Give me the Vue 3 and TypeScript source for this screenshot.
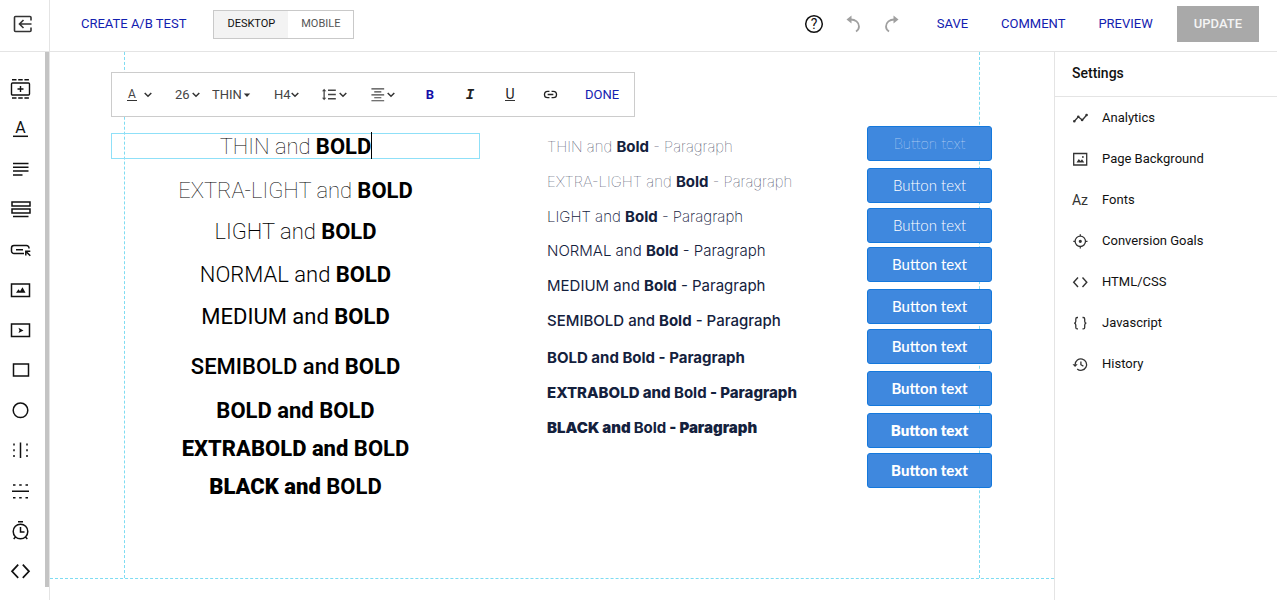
<script setup lang="ts">
import { h, ref } from 'vue'

interface Glyph { text: string; x: number; y: number; size: number; weight?: number }
interface Icon { line?: string; fill?: string; width?: number; glyph?: Glyph }

const icons: Record<string, Icon> = {
  back: { line: 'M21 8.500V5.500a1 1 0 0 0-1-1H5.500a1 1 0 0 0-1 1v13a1 1 0 0 0 1 1H20a1 1 0 0 0 1-1V15.500M21.500 12H10M13.500 8l-4 4 4 4', width: 1.6 },
  help: { line: 'M20.300 12a8.300 8.300 0 1 1-16.600 0a8.300 8.300 0 0 1 16.600 0', width: 1.5, glyph: { text: '?', x: 12, y: 17, size: 14 } },
  undo: { line: 'M9 7.500C14.500 7.200 18 10.500 18 14.500c0 2-1 3.700-3 5', fill: 'M5.500 7.500L10.500 3.500V11.500z', width: 1.8 },
  redo: { line: 'M15 7.500C9.500 7.200 6 10.500 6 14.500c0 2 1 3.700 3 5', fill: 'M18.500 7.500L13.500 3.500V11.500z', width: 1.8 },
  section: { line: 'M4.500 6h16a1 1 0 0 1 1 1v10a1 1 0 0 1-1 1h-16a1 1 0 0 1-1-1V7a1 1 0 0 1 1-1zM12.500 9v6M9.500 12h6M4 2.800h4.500M10.200 2.800h4.500M16.400 2.800h4.500M4 21h4.500M10.200 21h4.500M16.400 21h4.500', width: 1.4 },
  headline: { line: 'M5 19.300h15', glyph: { text: 'A', x: 12.5, y: 16, size: 16 } },
  paragraph: { line: 'M5 6.500h15.500M5 10.300h15.500M5 14.100h15.500M5 17.900h9.500' },
  form: { line: 'M4 5h18v4H4zM4 12h18v4H4zM5 19.500h15.500' },
  button: { line: 'M16 15.500H6a2.500 2.500 0 0 1-2.500-2.500v-3a2.500 2.500 0 0 1 2.500-2.500h12.500a2.500 2.500 0 0 1 2.500 2.500v.500M8 11.700h7M17.800 17.500v-4.300h4.500M18 13.500l4.300 4.300' },
  image: { line: 'M3.500 6h18v12.500h-18z', fill: 'M8 14.800l2.500-3.600 1.500 2 2.500-4 3 5.600z' },
  video: { line: 'M3.500 6h18v12.500h-18z', fill: 'M10.500 9.700l5 2.700-5 2.700 1-2.700z' },
  box: { line: 'M5.500 6h15v12h-15z' },
  circle: { line: 'M19.800 12.300a7.300 7.300 0 1 1-14.600 0a7.300 7.300 0 0 1 14.600 0' },
  vertical: { line: 'M12.500 4.500v15.500M6 5.500v2M6 11.300v2M6 17v2M19 5.500v2M19 11.300v2M19 17v2' },
  horizontal: { line: 'M4 12.300h17M5 6h2.500M11.200 6h2.500M17.500 6h2.500M5 18.700h2.500M11.200 18.700h2.500M17.500 18.700h2.500' },
  timer: { line: 'M19.800 12.500a7.300 7.300 0 1 1-14.600 0a7.300 7.300 0 0 1 14.600 0M12.500 8v5h4M10 2.800h5M7.500 18l-1.800 2M17.500 18l1.800 2' },
  code: { line: 'M10.200 5.700L4 12.300l6.200 6.600M14.800 5.700l6.200 6.600-6.200 6.600', width: 1.7 },
  analytics: { line: 'M6.300 15.300l4-4.500 4 3.200 4.400-5', fill: 'M5 15.300a1.300 1.300 0 1 0 2.600 0a1.300 1.300 0 1 0-2.600 0M9 10.800a1.300 1.300 0 1 0 2.600 0a1.300 1.300 0 1 0-2.600 0M12.800 14a1.300 1.300 0 1 0 2.600 0a1.300 1.300 0 1 0-2.600 0M17.300 9a1.300 1.300 0 1 0 2.600 0a1.300 1.300 0 1 0-2.600 0', width: 1.3 },
  background: { line: 'M5.700 6.500h13v11.500h-13z', fill: 'M8.500 15.500l2.300-3.500 1.700 2 1.500-1.700 2.300 3.200zM14 10a.9.9 0 1 0 1.800 0a.9.9 0 1 0-1.800 0', width: 1.3 },
  fonts: { glyph: { text: 'Az', x: 12, y: 17, size: 14 } },
  goals: { line: 'M17.500 12.300a5.200 5.200 0 1 1-10.400 0a5.200 5.200 0 0 1 10.400 0M12.300 5.300v2M12.300 17.500v2M5.300 12.300h2M17.500 12.300h2', fill: 'M10.700 12.300a1.600 1.600 0 1 0 3.200 0a1.600 1.600 0 1 0-3.200 0', width: 1.3 },
  html: { line: 'M10 7.500l-4.300 4.700L10 17M14.500 7.500l4.300 4.700-4.300 4.800', width: 1.4 },
  braces: { line: 'M10 6.500H9.200q-1.400 0-1.400 1.500v2.300q0 1.700-1.600 1.900q1.600.200 1.600 1.900V16.400q0 1.500 1.400 1.500H10M14.500 6.500h.8q1.400 0 1.400 1.500v2.300q0 1.700 1.600 1.900q-1.600.200-1.600 1.900V16.400q0 1.500-1.400 1.500h-.8', width: 1.3 },
  history: { line: 'M7.200 12.500a5.700 5.700 0 1 1 2 4.400M12.900 9.500v3.200l2.500 1.400', fill: 'M4.500 12.200h5.200L7.100 15z', width: 1.3 },
  spacing: { line: 'M3 5.500v13M8.500 6h11M8.500 12h11M8.500 18h11', fill: 'M0 7.500L3 4l3 3.500zM0 16.500L3 20l3-3.500z', width: 1.8 },
  align: { line: 'M2 4h18M6 8.200h10M2 12.400h18M6 16.600h10M2 20.800h18', width: 1.7 },
  link: { line: 'M10.500 7.500H8a4.500 4.500 0 0 0 0 9h2.500M13.500 7.500h2.500a4.500 4.500 0 0 1 0 9h-2.500M8 12h8', width: 1.9 },
}

const AppIcon = (props: { name: string }) => {
  const { line, fill, width, glyph } = icons[props.name]
  return h('svg', { viewBox: '0 0 24 24', 'aria-hidden': 'true' }, [
    line ? h('path', { d: line, fill: 'none', stroke: 'currentColor', 'stroke-width': width ?? 1.5 }) : null,
    fill ? h('path', { d: fill, fill: 'currentColor' }) : null,
    glyph
      ? h('text', {
          x: glyph.x, y: glyph.y, 'font-size': glyph.size, 'font-weight': glyph.weight ?? 400,
          'text-anchor': 'middle', fill: 'currentColor',
        }, glyph.text)
      : null,
  ])
}
AppIcon.props = ['name']

const tools = [
  ['section', 'Section'], ['headline', 'Headline'], ['paragraph', 'Paragraph'], ['form', 'Form'],
  ['button', 'Button'], ['image', 'Image'], ['video', 'Video'], ['box', 'Box'], ['circle', 'Circle'],
  ['vertical', 'Vertical line'], ['horizontal', 'Horizontal line'], ['timer', 'Timer'], ['code', 'Custom HTML'],
]

const settings = [
  ['analytics', 'Analytics'], ['background', 'Page Background'], ['fonts', 'Fonts'],
  ['goals', 'Conversion Goals'], ['html', 'HTML/CSS'], ['braces', 'Javascript'], ['history', 'History'],
]

// Vertical positions are measured from the top of the page frame.
const headings = [
  { label: 'THIN', weight: 100, y: 81 },
  { label: 'EXTRA-LIGHT', weight: 100, y: 125 },
  { label: 'LIGHT', weight: 200, y: 166 },
  { label: 'NORMAL', weight: 300, y: 209 },
  { label: 'MEDIUM', weight: 400, y: 251 },
  { label: 'SEMIBOLD', weight: 500, y: 301 },
  { label: 'BOLD', weight: 700, y: 345 },
  { label: 'EXTRABOLD', weight: 800, y: 383 },
  { label: 'BLACK', weight: 900, y: 421 },
]

const paragraphs = [
  { label: 'THIN', weight: 100, y: 83 },
  { label: 'EXTRA-LIGHT', weight: 100, y: 118 },
  { label: 'LIGHT', weight: 200, y: 153 },
  { label: 'NORMAL', weight: 300, y: 187 },
  { label: 'MEDIUM', weight: 400, y: 222 },
  { label: 'SEMIBOLD', weight: 500, y: 257 },
  { label: 'BOLD', weight: 700, y: 294 },
  { label: 'EXTRABOLD', weight: 800, y: 329 },
  { label: 'BLACK', weight: 900, y: 364 },
]

const pageButtons = [
  { weight: 100, y: 74 },
  { weight: 300, y: 116 },
  { weight: 300, y: 156 },
  { weight: 400, y: 195 },
  { weight: 500, y: 237 },
  { weight: 600, y: 277 },
  { weight: 700, y: 319 },
  { weight: 800, y: 361 },
  { weight: 900, y: 401 },
]

const device = ref<'desktop' | 'mobile'>('desktop')
const size = ref('26')
const weight = ref('THIN')
const tag = ref('H4')
</script>

<template>
  <div class="app">
    <header class="topbar">
      <button class="back" aria-label="Back"><AppIcon class="icon" name="back" /></button>
      <button class="action create">CREATE A/B TEST</button>
      <div class="devices">
        <button :class="{ active: device === 'desktop' }" @click="device = 'desktop'">DESKTOP</button>
        <button :class="{ active: device === 'mobile' }" @click="device = 'mobile'">MOBILE</button>
      </div>
      <div class="history">
        <button aria-label="Help"><AppIcon class="icon" name="help" /></button>
        <button class="dim" aria-label="Undo"><AppIcon class="icon" name="undo" /></button>
        <button class="dim" aria-label="Redo"><AppIcon class="icon" name="redo" /></button>
      </div>
      <div class="actions">
        <button class="action">SAVE</button>
        <button class="action">COMMENT</button>
        <button class="action">PREVIEW</button>
      </div>
      <button class="update">UPDATE</button>
    </header>

    <div class="body">
      <aside class="sidebar">
        <nav class="tools">
          <button v-for="[icon, label] in tools" :key="icon" :aria-label="label">
            <AppIcon class="icon" :name="icon" />
          </button>
        </nav>
        <div class="scroll"></div>
      </aside>

      <main class="canvas">
        <div class="fold">
          <div class="frame">
            <h4
              v-for="(item, i) in headings" :key="item.label" class="node heading" :class="{ selected: i === 0 }"
              :style="{ top: item.y + 'px', fontWeight: item.weight }"
            >{{ item.label }} and <b>BOLD</b><i v-if="i === 0" class="caret"></i></h4>

            <p
              v-for="p in paragraphs" :key="p.label" class="node paragraph"
              :style="{ top: p.y + 'px', fontWeight: p.weight }"
            >{{ p.label }} and <b>Bold</b> - Paragraph</p>

            <button
              v-for="b in pageButtons" :key="b.y" class="node cta"
              :style="{ top: b.y + 'px', fontWeight: b.weight }"
            >Button text</button>

            <div class="toolbar">
              <button class="drop" aria-label="Text colour">
                <span class="colour">A</span>
                <svg class="chevron" viewBox="0 0 8 8"><path d="M.7 2l3.300 3.300L7.300 2" /></svg>
              </button>
              <div class="pair">
                <label class="drop">
                  <select v-model="size" aria-label="Font size"><option>26</option><option>32</option></select>
                  <svg class="chevron" viewBox="0 0 8 8"><path d="M.7 2l3.300 3.300L7.300 2" /></svg>
                </label>
                <label class="drop wide">
                  <select v-model="weight" aria-label="Font weight"><option>THIN</option><option>BOLD</option></select>
                  <svg class="chevron solid" viewBox="0 0 8 8"><path d="M.8 2.500h6.400L4 6z" /></svg>
                </label>
              </div>
              <label class="drop">
                <select v-model="tag" aria-label="Heading level"><option>H4</option><option>H5</option></select>
                <svg class="chevron" viewBox="0 0 8 8"><path d="M.7 2l3.300 3.300L7.300 2" /></svg>
              </label>
              <button class="drop" aria-label="Line height">
                <AppIcon class="small" name="spacing" />
                <svg class="chevron" viewBox="0 0 8 8"><path d="M.7 2l3.300 3.300L7.300 2" /></svg>
              </button>
              <button class="drop" aria-label="Alignment">
                <AppIcon class="small" name="align" />
                <svg class="chevron" viewBox="0 0 8 8"><path d="M.7 2l3.300 3.300L7.300 2" /></svg>
              </button>
              <div class="marks">
                <button class="bold" aria-label="Bold">B</button>
                <button class="italic" aria-label="Italic">I</button>
                <button aria-label="Underline"><span class="under">U</span></button>
                <button aria-label="Link"><AppIcon class="small" name="link" /></button>
              </div>
              <button class="action">DONE</button>
            </div>
          </div>
        </div>
      </main>

      <aside class="panel">
        <h2>Settings</h2>
        <ul>
          <li v-for="[icon, label] in settings" :key="icon">
            <button><AppIcon class="icon" :name="icon" />{{ label }}</button>
          </li>
        </ul>
      </aside>
    </div>
  </div>
</template>

<style>
body {
  margin: 0;
}
</style>

<style scoped>
.app {
  display: flex;
  flex-direction: column;
  min-height: 100vh;
  overflow: hidden;
  background: #fff;
  color: #111;
  font: 13px/20px Roboto, "Liberation Sans", sans-serif;
}
.app * {
  box-sizing: border-box;
}
button,
select {
  margin: 0;
  padding: 0;
  border: 0;
  background: none;
  color: inherit;
  font: inherit;
  cursor: pointer;
}
.icon {
  display: block;
  width: 24px;
  height: 24px;
  flex: none;
}

.topbar {
  display: flex;
  align-items: center;
  padding: 0 18px 3px 0;
  border-bottom: 1px solid #e4e4e4;
  height: 52px;
}
.back {
  display: flex;
  align-items: center;
  align-self: stretch;
  width: 50px;
  margin-bottom: -3px;
  padding: 0 0 3px 10px;
  border-right: 1px solid #e4e4e4;
  color: #333;
}
.action {
  color: #1220b0;
  white-space: nowrap;
}
.create {
  margin-left: 31px;
}
.devices {
  display: flex;
  margin-left: 27px;
  border: 1px solid #c9c9c9;
  color: #555;
  font-size: 11px;
}
.devices button {
  height: 27px;
  padding: 0 13px;
}
.devices .active {
  background: #f3f3f3;
  color: #111;
}
.history {
  display: flex;
  gap: 15px;
  margin-left: auto;
}
.dim {
  color: #a0a0a0;
}
.actions {
  display: flex;
  gap: 33px;
  margin: 0 24px 0 33px;
}
.update {
  height: 36px;
  padding: 0 17px;
  background: #a9a9a9;
  color: #f4f4f4;
  font-weight: 500;
}

.body {
  display: flex;
  flex: 1;
}
.sidebar {
  display: flex;
  width: 50px;
  flex: none;
  border-right: 1px solid #e4e4e4;
}
.tools {
  display: flex;
  flex-direction: column;
  justify-content: space-between;
  padding: 25px 13px 17px 8px;
}
.scroll {
  width: 4px;
  margin-bottom: 13px;
  background: #c4c4c4;
}

.canvas {
  flex: 1;
  min-width: 0;
  padding-bottom: 21px;
}
.fold {
  height: 100%;
  border-bottom: 1px dashed #7edcf2;
}
.frame {
  position: relative;
  width: 856px;
  height: 100%;
  margin: 0 auto;
  border: 1px dashed #7edcf2;
  border-width: 0 1px;
}
.node {
  position: absolute;
  margin: 0;
  white-space: nowrap;
}
.heading {
  left: -14px;
  width: 369px;
  height: 26px;
  border: 1px solid transparent;
  color: #000;
  font-size: 22px;
  line-height: 26px;
  text-align: center;
}
.heading.selected {
  border-color: #8fe0f8;
}
.caret {
  display: inline-block;
  width: 1px;
  height: 27px;
  margin: -2px -1px -2px 0;
  background: #000;
  vertical-align: top;
}
.paragraph {
  left: 422px;
  color: #14213d;
  font-family: Inter, "Open Sans", sans-serif;
  font-size: 15px;
  line-height: 24px;
}
.node b {
  font-weight: 700;
}
.cta {
  left: 742px;
  width: 125px;
  height: 35px;
  padding-bottom: 2px;
  border: 1px solid #1478dc;
  border-radius: 3px;
  background: #3f88de;
  color: #fff;
  font-family: Lato, sans-serif;
  font-size: 15px;
}

.toolbar {
  position: absolute;
  top: 20px;
  left: -14px;
  display: flex;
  gap: 23px;
  align-items: center;
  height: 45px;
  padding: 0 15px;
  border: 1px solid #ccc;
  background: #fff;
  color: #444;
}
.drop {
  position: relative;
  display: flex;
  align-items: center;
  width: 25px;
}
.drop.wide {
  width: 39px;
}
.drop select {
  width: 100%;
  appearance: none;
  outline: 0;
}
.chevron {
  position: absolute;
  right: 0;
  width: 8px;
  height: 8px;
  fill: none;
  stroke: #333;
  stroke-width: 1.5;
  pointer-events: none;
}
.chevron.solid {
  fill: #333;
  stroke: none;
}
.pair {
  display: flex;
  gap: 12px;
}
.colour,
.under {
  display: inline-block;
  width: 10px;
  border-bottom: 1px solid #333;
  font-size: 12px;
  line-height: 11px;
  text-align: center;
}
.under {
  font-size: 14px;
  line-height: 12px;
}
.small {
  display: block;
  width: 17px;
  height: 17px;
  flex: none;
}
.marks {
  display: flex;
  gap: 16px;
}
.marks button {
  display: flex;
  align-items: center;
  justify-content: center;
  width: 24px;
  height: 24px;
  color: #222;
}
.marks .bold {
  color: #1410a8;
  font-weight: 700;
}
.marks .italic {
  font-family: "Liberation Mono", monospace;
  font-size: 14px;
  font-style: italic;
  font-weight: 700;
}

.panel {
  width: 223px;
  flex: none;
  border-left: 1px solid #e4e4e4;
}
.panel h2 {
  margin: 0;
  padding: 11px 17px 13px;
  border-bottom: 1px solid #e4e4e4;
  font-size: 14px;
  font-weight: 500;
  line-height: 20px;
}
.panel ul {
  margin: 0;
  padding: 0;
  list-style: none;
}
.panel button {
  display: flex;
  gap: 10px;
  align-items: center;
  width: 100%;
  height: 41px;
  padding: 0 13px;
}
.panel .icon {
  color: #333;
}
</style>
